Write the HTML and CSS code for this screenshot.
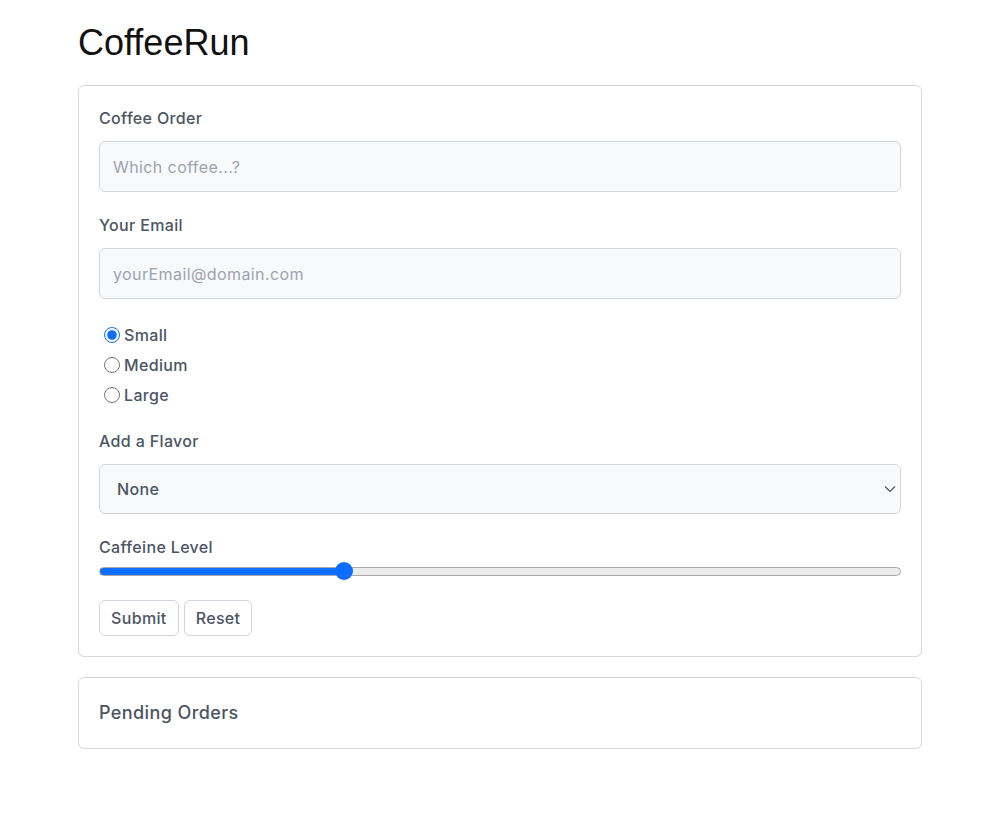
FILE: index.html
```html
<!DOCTYPE html>
<html lang="en">
<head>
<meta charset="utf-8">
<title>CoffeeRun</title>
<link rel="stylesheet" href="styles.css">
</head>
<body>
<div class="container">
  <h1 class="title">CoffeeRun</h1>
  <form class="card order-form">
    <div class="field">
      <label class="label" for="coffee">Coffee Order</label>
      <input class="input" id="coffee" type="text" placeholder="Which coffee...?">
    </div>
    <div class="field">
      <label class="label" for="email">Your Email</label>
      <input class="input" id="email" type="email" placeholder="yourEmail@domain.com">
    </div>
    <div class="field radios">
      <label class="radio"><input type="radio" name="size" checked><span>Small</span></label>
      <label class="radio"><input type="radio" name="size"><span>Medium</span></label>
      <label class="radio"><input type="radio" name="size"><span>Large</span></label>
    </div>
    <div class="field">
      <label class="label" for="flavor">Add a Flavor</label>
      <div class="select-wrap">
        <select class="input select" id="flavor">
          <option>None</option>
          <option>Caramel</option>
          <option>Almond</option>
          <option>Mocha</option>
        </select>
        <svg class="chevron" width="12" height="8" viewBox="0 0 12 8"><path d="M1 1.5 L6 6.5 L11 1.5" fill="none" stroke="#4b5563" stroke-width="1.2"/></svg>
      </div>
    </div>
    <div class="field range-field">
      <label class="label" for="strength">Caffeine Level</label>
      <input class="range" id="strength" type="range" min="0" max="100" value="30" style="--fill: 30%">
    </div>
    <div class="buttons">
      <button class="btn" type="submit">Submit</button>
      <button class="btn" type="reset">Reset</button>
    </div>
  </form>
  <div class="card pending">
    <h2 class="pending-title">Pending Orders</h2>
  </div>
</div>
</body>
</html>
```
FILE: styles.css
```css
* { box-sizing: border-box; }
html, body { margin: 0; padding: 0; background: #fff; }
body {
  font-family: Inter, "Noto Sans", sans-serif;
  color: #4b5563;
  letter-spacing: 0.35px;
}
.container {
  width: 844px;
  margin: 0 auto;
}
.title {
  font-family: "Liberation Sans", Arial, sans-serif;
  font-weight: 400;
  font-size: 36px;
  line-height: 44px;
  letter-spacing: 0;
  color: #111;
  margin: 21px 0 20px;
}
.card {
  border: 1px solid #d5d8dd;
  border-radius: 6px;
  padding: 20px;
  background: #fff;
}
.order-form { display: flex; flex-direction: column; }
.field { display: flex; flex-direction: column; margin-bottom: 21px; }
.label {
  font-size: 16px;
  line-height: 24px;
  font-weight: 500;
  margin-bottom: 11px;
  color: #4b5563;
}
.input {
  font-family: inherit;
  font-size: 16px;
  letter-spacing: 0.4px;
  height: 51px;
  padding: 0 13px;
  border: 1px solid #d1d5db;
  border-radius: 6px;
  background: #f8f9fb;
  color: #4b5563;
  outline: none;
  width: 100%;
}
.input::placeholder { color: #9ca3af; }
.radios { margin-bottom: 19px; }
.radio {
  display: flex;
  align-items: center;
  height: 30px;
  font-size: 16px;
  font-weight: 500;
}
.radio input {
  width: 16px;
  height: 16px;
  margin: 0 4px 0 5px;
  accent-color: #0d6efd;
}
.select-wrap { position: relative; }
.select {
  appearance: none;
  -webkit-appearance: none;
  height: 50px;
  padding-left: 17px;
  color: #4b5563;
  font-weight: 500;
}
.chevron {
  position: absolute;
  right: 5px;
  top: 21px;
  pointer-events: none;
}
.range-field { margin-bottom: 20px; }
.range-field .label { margin-bottom: 3px; }
.range {
  -webkit-appearance: none;
  appearance: none;
  width: 100%;
  height: 18px;
  margin: 0;
  background: transparent;
}
.range::-webkit-slider-runnable-track {
  height: 9px;
  border-radius: 5px;
  border: 1px solid #a9a9a9;
  background: linear-gradient(to right, #0d6efd 0, #0d6efd var(--fill), #ececec var(--fill), #ececec 100%);
}
.range::-webkit-slider-thumb {
  -webkit-appearance: none;
  width: 18px;
  height: 18px;
  border-radius: 50%;
  background: #0d6efd;
  border: none;
  margin-top: -5.5px;
}
.buttons { display: flex; gap: 5px; }
.btn {
  font-family: inherit;
  font-size: 16px;
  font-weight: 500;
  letter-spacing: 0.35px;
  color: #4b5563;
  background: #fff;
  border: 1px solid #d1d5db;
  border-radius: 6px;
  height: 36px;
  padding: 0 11px;
}
.pending { margin-top: 20px; }
.pending-title {
  margin: 0;
  font-size: 18px;
  line-height: 30px;
  font-weight: 500;
  letter-spacing: 0.4px;
  color: #4b5563;
}
```
